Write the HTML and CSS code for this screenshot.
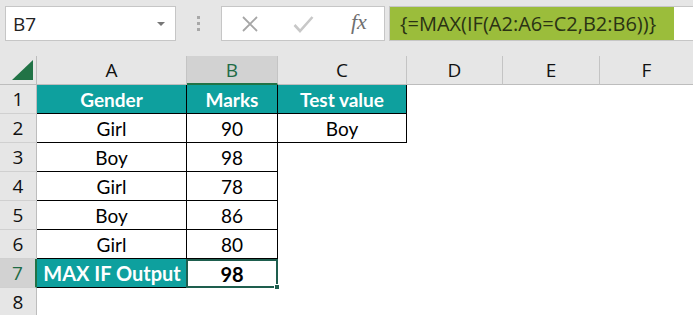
FILE: index.html
```html
<!DOCTYPE html>
<html lang="en">
<head>
    <meta charset="UTF-8">
    <title>MAX IF</title>
    <link rel="stylesheet" href="styles.css">
</head>
<body>
    <div class="toolbar">
        <div class="name-box">
            <span>B7</span>
            <span class="arrow"></span>
        </div>
        <div class="grip"><i></i><i></i><i></i></div>
        <div class="fx-box">
            <svg class="icon-x" width="18" height="16" viewBox="0 0 18 16">
                <path d="M2 1 L16 15 M16 1 L2 15" stroke="#a6a6a6" stroke-width="1.8" fill="none"/>
            </svg>
            <svg class="icon-check" width="21" height="18" viewBox="0 0 21 18">
                <path d="M1.5 10 L7 16 L19.5 2" stroke="#c8c8c8" stroke-width="2.6" fill="none"/>
            </svg>
            <span class="fx">fx</span>
        </div>
        <div class="formula">
            <span class="formula-text">{=MAX(IF(A2:A6=C2,B2:B6))}</span>
        </div>
    </div>

    <div class="sheet">
        <div class="corner"><span class="tri"></span></div>
        <div class="col-head">A</div>
        <div class="col-head active">B</div>
        <div class="col-head">C</div>
        <div class="col-head">D</div>
        <div class="col-head">E</div>
        <div class="col-head last">F</div>

        <div class="row-head">1</div>
        <div class="cell head">Gender</div>
        <div class="cell head">Marks</div>
        <div class="cell head">Test value</div>
        <div class="cell"></div><div class="cell"></div><div class="cell"></div>

        <div class="row-head">2</div>
        <div class="cell data">Girl</div>
        <div class="cell data">90</div>
        <div class="cell data">Boy</div>
        <div class="cell"></div><div class="cell"></div><div class="cell"></div>

        <div class="row-head">3</div>
        <div class="cell data">Boy</div>
        <div class="cell data">98</div>
        <div class="cell"></div><div class="cell"></div><div class="cell"></div><div class="cell"></div>

        <div class="row-head">4</div>
        <div class="cell data">Girl</div>
        <div class="cell data">78</div>
        <div class="cell"></div><div class="cell"></div><div class="cell"></div><div class="cell"></div>

        <div class="row-head">5</div>
        <div class="cell data">Boy</div>
        <div class="cell data">86</div>
        <div class="cell"></div><div class="cell"></div><div class="cell"></div><div class="cell"></div>

        <div class="row-head">6</div>
        <div class="cell data">Girl</div>
        <div class="cell data">80</div>
        <div class="cell"></div><div class="cell"></div><div class="cell"></div><div class="cell"></div>

        <div class="row-head active">7</div>
        <div class="cell head output">MAX IF Output</div>
        <div class="cell selected">98<span class="handle"></span></div>
        <div class="cell"></div><div class="cell"></div><div class="cell"></div><div class="cell"></div>

        <div class="row-head">8</div>
        <div class="cell"></div><div class="cell"></div><div class="cell"></div>
        <div class="cell"></div><div class="cell"></div><div class="cell"></div>
    </div>
</body>
</html>
```

FILE: styles.css
```css
* {
    box-sizing: border-box;
}

body {
    margin: 0;
    background-color: #e6e6e6;
    font-family: "Open Sans", sans-serif;
    width: 693px;
    height: 315px;
    overflow: hidden;
}

/* formula bar */
.toolbar {
    height: 56px;
    display: flex;
    align-items: flex-start;
    padding-top: 6px;
}

.name-box {
    margin-left: 5px;
    width: 171px;
    height: 35px;
    background: #fff;
    border: 1px solid #c6c6c6;
    display: flex;
    align-items: center;
    justify-content: space-between;
    padding: 0 10px 0 7px;
    font-size: 19px;
    color: #222;
}

.arrow {
    width: 0;
    height: 0;
    border-left: 4px solid transparent;
    border-right: 4px solid transparent;
    border-top: 4px solid #777;
}

.grip {
    width: 45px;
    height: 35px;
    display: flex;
    flex-direction: column;
    align-items: center;
    justify-content: center;
    gap: 3px;
}

.grip i {
    display: block;
    width: 3px;
    height: 3px;
    background: #a8a8a8;
}

.fx-box {
    width: 164px;
    height: 35px;
    background: #fff;
    border: 1px solid #c6c6c6;
    display: flex;
    align-items: center;
    padding-left: 19px;
}

.icon-x {
    margin-right: 34px;
}

.icon-check {
    margin-right: 37px;
}

.fx {
    font-family: "Liberation Serif", serif;
    font-style: italic;
    font-size: 22px;
    color: #707070;
    margin-top: -4px;
}

.formula {
    margin-left: 4px;
    flex: 1;
    height: 35px;
    background: #fff;
    border: 1px solid #c6c6c6;
    border-right: none;
    display: flex;
}

.formula-text {
    width: 284px;
    background: #9bbd3b;
    color: #2a3314;
    font-size: 20px;
    line-height: 33px;
    padding-left: 10px;
    white-space: nowrap;
}

/* worksheet */
.sheet {
    display: grid;
    grid-template-columns: 37px 150px 91px 129px 96px 97px 93px;
    grid-template-rows: 29px repeat(8, 29px);
    font-family: Lato, "Open Sans", sans-serif;
}

.corner {
    border-right: 1px solid #bdbdbd;
    border-bottom: 1px solid #bdbdbd;
    display: flex;
    align-items: flex-end;
    justify-content: flex-end;
    padding: 0 3px 4px 0;
}

.tri {
    width: 0;
    height: 0;
    border-left: 21px solid transparent;
    border-bottom: 20px solid #217346;
}

.col-head {
    border-right: 1px solid #c4c4c4;
    border-bottom: 1px solid #bdbdbd;
    display: flex;
    align-items: center;
    justify-content: center;
    font-family: "Open Sans", sans-serif;
    font-size: 19px;
    color: #111;
}

.col-head.last {
    border-right: none;
}

.col-head.active {
    background: #d2d2d2;
    color: #1e6b45;
    border-bottom: 2px solid #217346;
}

.row-head {
    border-right: 1px solid #bdbdbd;
    border-bottom: 1px solid #d0d0d0;
    display: flex;
    align-items: center;
    justify-content: center;
    font-family: "Open Sans", sans-serif;
    font-size: 19px;
    color: #111;
}

.row-head.active {
    background: #d2d2d2;
    color: #1e6b45;
    border-right: 2px solid #217346;
}

.cell {
    background: #fff;
    display: flex;
    align-items: center;
    justify-content: center;
    font-size: 19px;
    color: #000;
    white-space: nowrap;
}

.cell.head {
    background: #0ea09e;
    color: #fff;
    font-weight: bold;
    border-right: 1px solid #000;
    border-bottom: 1px solid #000;
}

.cell.output {
    border-right: none;
    font-size: 20px;
}

.cell.data {
    border-right: 1px solid #000;
    border-bottom: 1px solid #000;
}

.cell.selected {
    position: relative;
    font-weight: bold;
    font-size: 20px;
    border: 2px solid #1e5e4e;
    margin-left: -1px;
}

.handle {
    position: absolute;
    right: -4px;
    bottom: -4px;
    width: 6px;
    height: 6px;
    background: #1e5e4e;
    border: 1px solid #fff;
}
```
